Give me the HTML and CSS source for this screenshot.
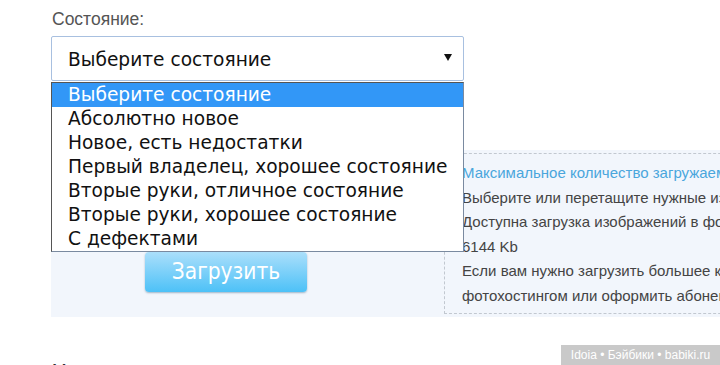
FILE: index.html
```html
<!DOCTYPE html>
<html lang="ru">
<head>
<meta charset="utf-8">
<title>Состояние</title>
<link rel="stylesheet" href="styles.css">
</head>
<body>
<div class="page">
  <div class="field-label">Состояние:</div>
  <div class="select-wrap">
    <div class="select">
      <span class="select-value">Выберите состояние</span>
      <svg class="select-arrow" width="8" height="7" viewBox="0 0 8 7"><path d="M0 0H8L4 7Z" fill="#111"/></svg>
    </div>
    <ul class="options">
      <li class="option active">Выберите состояние</li>
      <li class="option">Абсолютно новое</li>
      <li class="option">Новое, есть недостатки</li>
      <li class="option">Первый владелец, хорошее состояние</li>
      <li class="option">Вторые руки, отличное состояние</li>
      <li class="option">Вторые руки, хорошее состояние</li>
      <li class="option">С дефектами</li>
    </ul>
  </div>
  <div class="upload">
    <div class="upload-left">
      <button class="upload-btn">Загрузить</button>
    </div>
    <div class="upload-info">
      <div class="info-title">Максимальное количество загружаемых изображений: 10</div>
      <div class="info-line">Выберите или перетащите нужные изображения в эту область</div>
      <div class="info-line">Доступна загрузка изображений в форматах jpg, png, gif. Максимальный размер файла</div>
      <div class="info-line">6144 Kb</div>
      <div class="info-line">Если вам нужно загрузить большее количество изображений, воспользуйтесь</div>
      <div class="info-line">фотохостингом или оформить абонемент</div>
    </div>
  </div>
  <div class="field-label next">Модель:</div>
</div>
<div class="watermark">Idoia • Бэйбики • babiki.ru</div>
</body>
</html>
```
FILE: styles.css
```css
html, body {
  margin: 0;
  padding: 0;
  overflow: hidden;
  background: #fff;
  width: 720px;
  height: 365px;
}
.page {
  position: relative;
  margin-left: 51px;
  width: 1000px;
  font-family: "Liberation Sans", Arial, sans-serif;
}
.field-label {
  padding-top: 10px;
  height: 20px;
  margin-bottom: 6px;
  font-size: 17.5px;
  line-height: 19px;
  color: #555;
  padding-left: 1px;
}
.field-label.next {
  margin-top: 35px;
  color: #333;
}
.select-wrap {
  position: relative;
  width: 413px;
}
.select {
  box-sizing: border-box;
  height: 45px;
  border: 1px solid #a8c0e0;
  border-radius: 2px;
  display: flex;
  align-items: center;
  justify-content: space-between;
  padding: 0 11px 0 16px;
  background: #fff;
}
.select-value {
  font-family: "DejaVu Sans", Verdana, sans-serif;
  font-size: 18.6px;
  color: #111;
  padding-top: 2px;
}
.select-arrow {
  display: block;
  margin-bottom: 3px;
}
.options {
  position: absolute;
  top: 46px;
  left: 0;
  z-index: 2;
  box-sizing: border-box;
  width: 413px;
  margin: 0;
  padding: 0;
  list-style: none;
  background: #fff;
  border: 1px solid #555;
  border-right-color: #7a8aa0;
  border-bottom-color: #7a8aa0;
}
.option {
  height: 24px;
  line-height: 24px;
  padding-left: 16px;
  font-family: "DejaVu Sans", Verdana, sans-serif;
  font-size: 18.6px;
  color: #111;
  white-space: nowrap;
}
.option.active {
  background: #3297f7;
  color: #fff;
}
.upload {
  margin-top: 69px;
  height: 167px;
  box-sizing: border-box;
  padding: 3px 0 3px 0;
  background: #f2f6fc;
  display: flex;
}
.upload-left {
  width: 393px;
  flex: none;
}
.upload-btn {
  margin: 99px 0 0 94px;
  width: 162px;
  height: 40px;
  border: none;
  border-radius: 4px;
  background: linear-gradient(#abdffb, #4dc1f7);
  box-shadow: 0 1px 2px rgba(0, 60, 100, 0.35);
  color: #fff;
  font-family: "DejaVu Sans Condensed", "DejaVu Sans", sans-serif;
  font-size: 22.5px;
  padding: 0 0 2px 0;
}
.upload-info {
  flex: 1;
  border: 1px dashed #c2c8d0;
  padding: 7px 0 0 17px;
  font-size: 15px;
  line-height: 24.5px;
  color: #444;
  white-space: nowrap;
}
.info-title {
  color: #4aa6dc;
}
.watermark {
  position: absolute;
  right: 0;
  bottom: 0;
  width: 159px;
  height: 20px;
  background: #c9c9c9;
  color: #fff;
  font-family: "Liberation Sans", Arial, sans-serif;
  font-size: 12px;
  line-height: 20px;
  text-align: center;
}
```
